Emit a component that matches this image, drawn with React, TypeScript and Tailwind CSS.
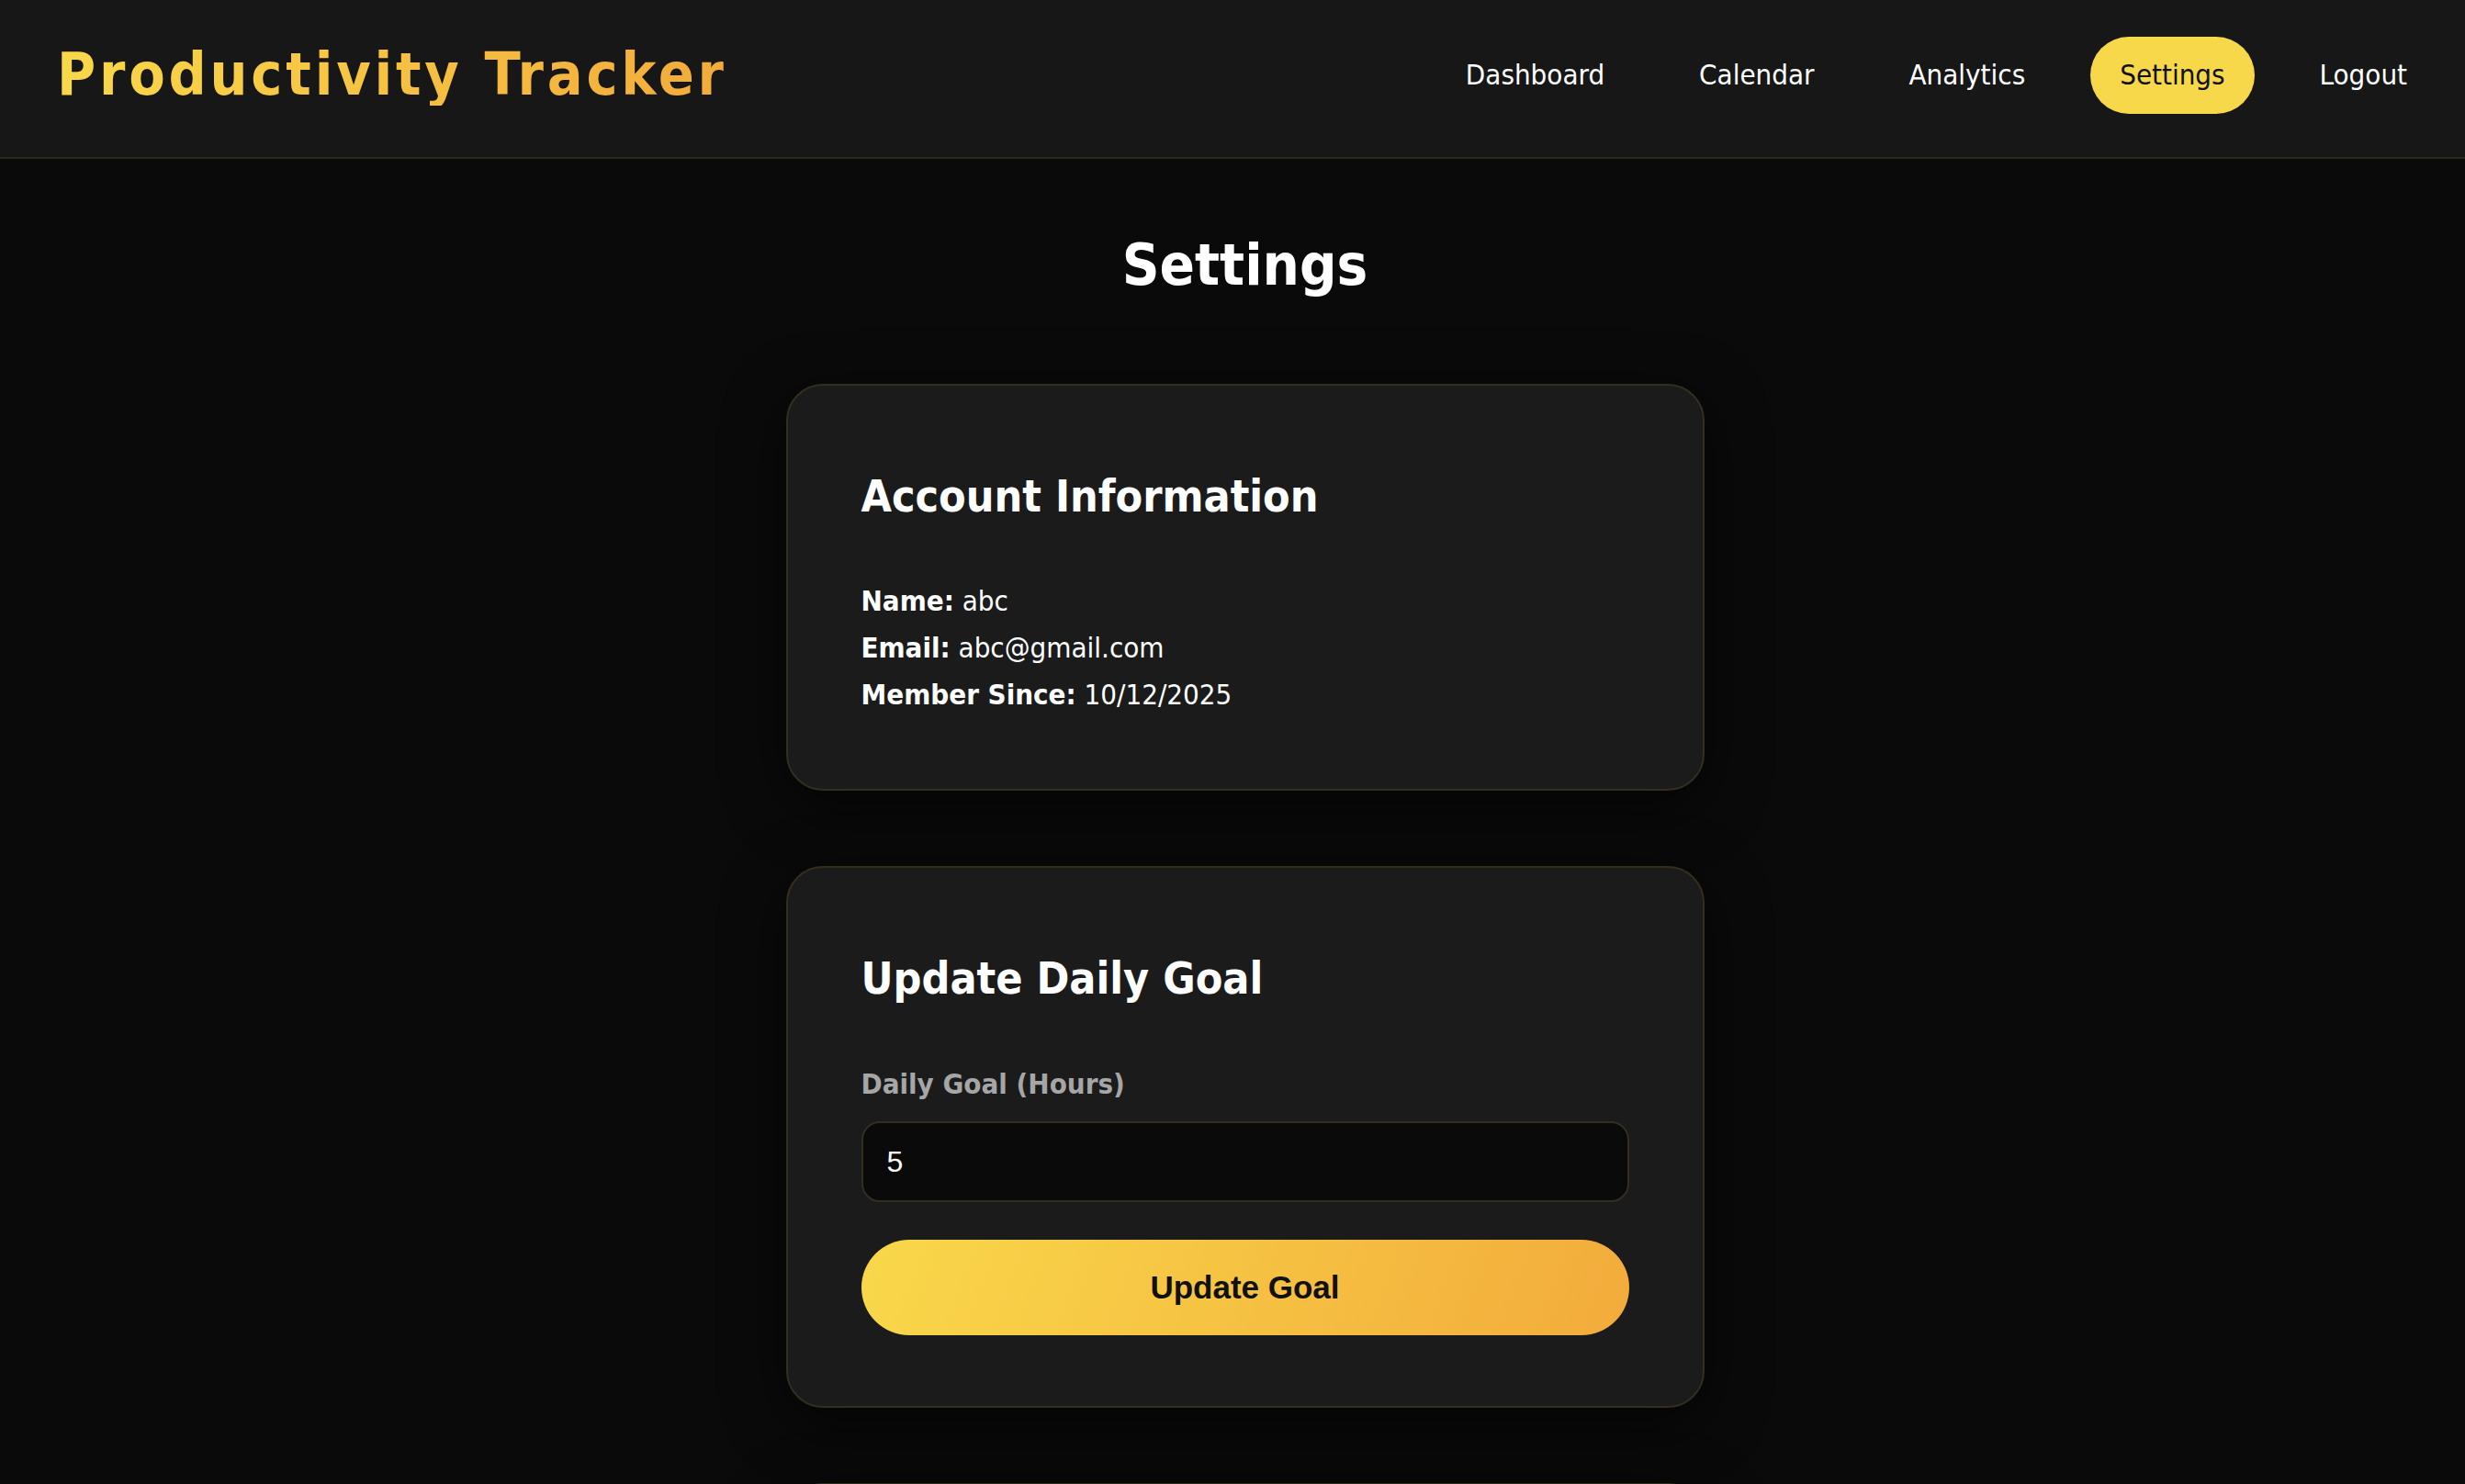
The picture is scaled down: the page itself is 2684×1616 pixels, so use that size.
import { useState } from "react";

const NAV_LINKS = ["Dashboard", "Calendar", "Analytics", "Settings", "Logout"];

const USER = {
  name: "abc",
  email: "abc@gmail.com",
  memberSince: "10/12/2025",
};

function Navbar({ active }: { active: string }) {
  return (
    <header className="h-[173px] bg-[#171717] border-b-2 border-[#2c2819] flex items-center justify-between pl-[62px] pr-[31px] pb-[8px]">
      <h1 className="font-['DejaVu_Sans_Condensed','DejaVu_Sans',sans-serif] font-bold text-[64px] leading-none tracking-[3.8px] bg-[linear-gradient(90deg,#f9d84a,#f2ab3b)] bg-clip-text text-transparent pb-[2px]">
        Productivity Tracker
      </h1>

      <nav className="flex items-center gap-[39px]">
        {NAV_LINKS.map((link) => (
          <a
            key={link}
            href="#"
            className={
              link === active
                ? "h-[84px] px-[32px] flex items-center rounded-full bg-[#f8d84b] text-[#111111] text-[31px]"
                : "h-[84px] px-[32px] flex items-center rounded-full text-white text-[31px]"
            }
          >
            {link}
          </a>
        ))}
      </nav>
    </header>
  );
}

function Card({ children }: { children?: React.ReactNode }) {
  return (
    <section className="w-[1000px] min-h-[300px] bg-[#1b1b1b] border-2 border-[#332e1d] rounded-[40px] pt-[91px] pb-[77px] px-[80px] shadow-[0_16px_64px_rgba(0,0,0,0.6)]">
      {children}
    </section>
  );
}

function AccountInfo() {
  return (
    <Card>
      <h2 className="text-[48px] leading-[58px] font-bold text-white mb-[60px]">
        Account Information
      </h2>
      <div className="text-[31px] leading-[51px] text-white">
        <p>
          <strong>Name:</strong> {USER.name}
        </p>
        <p>
          <strong>Email:</strong> {USER.email}
        </p>
        <p>
          <strong>Member Since:</strong> {USER.memberSince}
        </p>
      </div>
    </Card>
  );
}

function DailyGoal() {
  const [goal, setGoal] = useState("5");

  return (
    <Card>
      <h2 className="text-[48px] leading-[58px] font-bold text-white mb-[66px]">
        Update Daily Goal
      </h2>
      <label className="block text-[31px] leading-[40px] font-bold text-[#a6a6a6] mb-[21px]">
        Daily Goal (Hours)
      </label>
      <input
        type="text"
        value={goal}
        onChange={(e) => setGoal(e.target.value)}
        className="w-full h-[88px] bg-[#0a0a0a] border-2 border-[#332e1d] rounded-[20px] px-[26px] text-[32px] text-white font-['Liberation_Sans',Arial,sans-serif] outline-none"
      />
      <button className="mt-[41px] w-full h-[104px] rounded-full bg-[linear-gradient(110deg,#f9d84a,#f2ab3b)] text-[#111111] text-[35px] font-bold font-['Liberation_Sans',Arial,sans-serif]">
        Update Goal
      </button>
    </Card>
  );
}

export default function App() {
  return (
    <div className="h-screen overflow-hidden bg-[#0a0a0a] font-['DejaVu_Sans_Condensed','DejaVu_Sans',sans-serif]">
      <Navbar active="Settings" />

      <main className="flex flex-col items-center pl-[27px] pt-[78px]">
        <h1 className="text-[63px] leading-[76px] font-bold text-white mb-[91px]">
          Settings
        </h1>

        <div className="flex flex-col gap-[82px]">
          <AccountInfo />
          <DailyGoal />
          {/* next card starts just below the fold */}
          <Card />
        </div>
      </main>
    </div>
  );
}
